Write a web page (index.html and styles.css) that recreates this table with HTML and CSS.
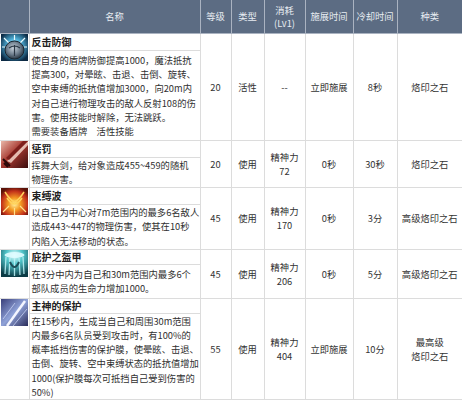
FILE: index.html
```html
<!DOCTYPE html>
<html lang="zh">
<head>
<meta charset="utf-8">
<link rel="stylesheet" href="styles.css">
</head>
<body>
<table class="skills">
  <colgroup>
    <col class="c-icon"><col class="c-name"><col class="c-lv"><col class="c-type"><col class="c-cost"><col class="c-cast"><col class="c-cd"><col class="c-kind">
  </colgroup>
  <thead>
    <tr class="head">
      <th></th><th>名称</th><th>等级</th><th>类型</th><th><span class="hl">消耗</span><span class="hl">(Lv1)</span></th><th>施展时间</th><th>冷却时间</th><th>种类</th>
    </tr>
  </thead>
  <tbody>
    <tr class="t t1">
      <td class="icon" rowspan="2">
        <svg width="27" height="27" viewBox="0 0 27 27"><defs><radialGradient id="g1" cx="50%" cy="45%" r="60%"><stop offset="0" stop-color="#d8f4ff"/><stop offset="0.45" stop-color="#4fb0d8"/><stop offset="1" stop-color="#0c2a44"/></radialGradient><radialGradient id="s1" cx="45%" cy="40%" r="60%"><stop offset="0" stop-color="#c9d3dc"/><stop offset="0.6" stop-color="#6d7d8c"/><stop offset="1" stop-color="#2a3642"/></radialGradient></defs><rect width="27" height="27" fill="url(#g1)"/><path d="M3 4 L8 9 M24 4 L19 9 M13.5 1 V6 M1 13 H5 M26 13 H22" stroke="#e8fbff" stroke-width="1.2"/><ellipse cx="13.5" cy="16" rx="9.5" ry="9" fill="url(#s1)" stroke="#1b2630" stroke-width="1"/><path d="M8 14 Q13.5 10 19 14 M13.5 11 V22" stroke="#2b3845" stroke-width="1.2" fill="none"/></svg>
      </td>
      <td class="title">反击防御</td>
      <td class="val" rowspan="2">20</td><td class="val" rowspan="2">活性</td><td class="val" rowspan="2">--</td><td class="val" rowspan="2">立即施展</td><td class="val" rowspan="2">8秒</td><td class="val" rowspan="2">烙印之石</td>
    </tr>
    <tr class="d d1"><td class="desc">使自身的盾牌防御提高1000，魔法抵抗<br>提高300，对晕眩、击退、击倒、旋转、<br>空中束缚的抵抗值增加3000，向20m内<br>对自己进行物理攻击的敌人反射108的伤<br>害。使用技能时解除，无法跳跃。<br>需要装备盾牌　活性技能</td></tr>

    <tr class="t t2">
      <td class="icon" rowspan="2">
        <svg width="27" height="27" viewBox="0 0 27 27"><defs><linearGradient id="g2" x1="0" y1="0" x2="1" y2="1"><stop offset="0" stop-color="#e9b7a8"/><stop offset="0.45" stop-color="#a83a32"/><stop offset="1" stop-color="#3a0c0c"/></linearGradient></defs><rect width="27" height="27" fill="url(#g2)"/><path d="M27 0 L27 4 L10 22 L6 20 Z" fill="#f2d4c8" opacity="0.85"/><path d="M22 0 L27 0 L8 19 L5 17 Z" fill="#7d1f1c"/><path d="M3 22 L7 26 M2 18 L9 25" stroke="#2a0808" stroke-width="2"/></svg>
      </td>
      <td class="title">惩罚</td>
      <td class="val" rowspan="2">20</td><td class="val" rowspan="2">使用</td><td class="val" rowspan="2">精神力<br>72</td><td class="val" rowspan="2">0秒</td><td class="val" rowspan="2">30秒</td><td class="val" rowspan="2">烙印之石</td>
    </tr>
    <tr class="d d2"><td class="desc">挥舞大剑，给对象造成455~459的随机<br>物理伤害。</td></tr>

    <tr class="t t3">
      <td class="icon" rowspan="2">
        <svg width="27" height="27" viewBox="0 0 27 27"><defs><radialGradient id="g3" cx="50%" cy="60%" r="65%"><stop offset="0" stop-color="#fff2a0"/><stop offset="0.35" stop-color="#f49a22"/><stop offset="0.75" stop-color="#c1301a"/><stop offset="1" stop-color="#5a1208"/></radialGradient></defs><rect width="27" height="27" fill="url(#g3)"/><path d="M4 4 Q9 12 13.5 14 Q18 12 23 4 M6 10 Q10 16 13.5 16 Q17 16 21 10" stroke="#ffd25a" stroke-width="1.5" fill="none"/><path d="M2 24 L8 18 M25 24 L19 18 M13.5 27 V20" stroke="#ffe08a" stroke-width="1.2"/></svg>
      </td>
      <td class="title">束缚波</td>
      <td class="val" rowspan="2">45</td><td class="val" rowspan="2">使用</td><td class="val" rowspan="2">精神力<br>170</td><td class="val" rowspan="2">0秒</td><td class="val" rowspan="2">3分</td><td class="val" rowspan="2">高级烙印之石</td>
    </tr>
    <tr class="d d3"><td class="desc">以自己为中心对7m范围内的最多6名敌人<br>造成443~447的物理伤害，使其在10秒<br>内陷入无法移动的状态。</td></tr>

    <tr class="t t4">
      <td class="icon" rowspan="2">
        <svg width="27" height="27" viewBox="0 0 27 27"><defs><radialGradient id="g4" cx="50%" cy="20%" r="80%"><stop offset="0" stop-color="#e8ffff"/><stop offset="0.4" stop-color="#4fc3c8"/><stop offset="1" stop-color="#0b3a44"/></radialGradient></defs><rect width="27" height="27" fill="url(#g4)"/><ellipse cx="13.5" cy="5" rx="10" ry="3" fill="#dffcff" opacity="0.9"/><path d="M5 7 L4 24 M9 8 L8 25 M13.5 8 V26 M18 8 L19 25 M22 7 L23 24" stroke="#bff4f8" stroke-width="1.3" opacity="0.85"/><path d="M9 12 Q13.5 22 18 12" stroke="#1d4f58" stroke-width="2" fill="none"/></svg>
      </td>
      <td class="title">庇护之盔甲</td>
      <td class="val" rowspan="2">45</td><td class="val" rowspan="2">使用</td><td class="val" rowspan="2">精神力<br>206</td><td class="val" rowspan="2">0秒</td><td class="val" rowspan="2">5分</td><td class="val" rowspan="2">高级烙印之石</td>
    </tr>
    <tr class="d d4"><td class="desc">在3分中内为自己和30m范围内最多6个<br>部队成员的生命力增加1000。</td></tr>

    <tr class="t t5">
      <td class="icon" rowspan="2">
        <svg width="27" height="27" viewBox="0 0 27 27"><defs><linearGradient id="g5" x1="0" y1="0" x2="1" y2="1"><stop offset="0" stop-color="#3a3f7a"/><stop offset="0.5" stop-color="#8fa2d8"/><stop offset="1" stop-color="#2a2c5a"/></linearGradient></defs><rect width="27" height="27" fill="url(#g5)"/><path d="M6 27 L24 2" stroke="#f4f6ff" stroke-width="2.5"/><path d="M2 20 L14 4 M12 27 L26 10" stroke="#c8d2f4" stroke-width="1" opacity="0.8"/></svg>
      </td>
      <td class="title">主神的保护</td>
      <td class="val" rowspan="2">55</td><td class="val" rowspan="2">使用</td><td class="val" rowspan="2">精神力<br>404</td><td class="val" rowspan="2">立即施展</td><td class="val" rowspan="2">10分</td><td class="val" rowspan="2">最高级<br>烙印之石</td>
    </tr>
    <tr class="d d5"><td class="desc">在15秒内，生成当自己和周围30m范围<br>内最多6名队员受到攻击时，有100%的<br>概率抵挡伤害的保护膜，使晕眩、击退、<br>击倒、旋转、空中束缚状态的抵抗值增加<br>1000(保护膜每次可抵挡自己受到伤害的<br>50%)</td></tr>
  </tbody>
</table>
</body>
</html>
```
FILE: styles.css
```css
html, body {
  margin: 0;
  padding: 0;
  background: #ffffff;
}
.skills {
  width: 462px;
  border-collapse: collapse;
  table-layout: fixed;
  font-family: "Noto Sans CJK SC", "Noto Sans", sans-serif;
  font-size: 9.3px;
  color: #333333;
}
.c-icon { width: 29px; }
.c-name { width: 171px; }
.c-lv { width: 31px; }
.c-type { width: 33px; }
.c-cost { width: 41px; }
.c-cast { width: 48px; }
.c-cd { width: 44px; }
.c-kind { width: 65px; }

.head th {
  height: 33px;
  padding: 0;
  background: #5c6c83;
  color: #e8ecf2;
  font-weight: normal;
  font-size: 9.3px;
  line-height: 13px;
  text-align: center;
  vertical-align: middle;
  border: 1px solid #aab3c1;
  border-top: none;
}
.head th:first-child { border-left: none; }
.head th:last-child { border-right: none; }
.hl {
  display: block;
  line-height: 13px;
}

.skills td {
  border: 1px solid #dcdcdc;
  padding: 0;
}
.skills td:first-child { border-left: none; }
.skills td:last-child { border-right: none; }

.icon {
  vertical-align: top;
  padding: 0;
}
.icon svg {
  display: block;
  margin: 0 0 0 1px;
}
.title {
  font-weight: bold;
  font-size: 10px;
  color: #222222;
  padding: 0 2px !important;
  line-height: 14px;
  vertical-align: middle;
}
.desc {
  line-height: 14.3px;
  padding: 0 2px !important;
  vertical-align: middle;
  white-space: nowrap;
  color: #303030;
}
.val {
  text-align: center;
  vertical-align: middle;
  line-height: 14px;
}
.t1 { height: 17px; }
.d1 { height: 90px; }
.t2 { height: 17px; }
.d2 { height: 29px; }
.t3 { height: 17px; }
.d3 { height: 45px; }
.t4 { height: 15px; }
.d4 { height: 34px; }
.t5 { height: 15px; }
.d5 { height: 86px; }
```
